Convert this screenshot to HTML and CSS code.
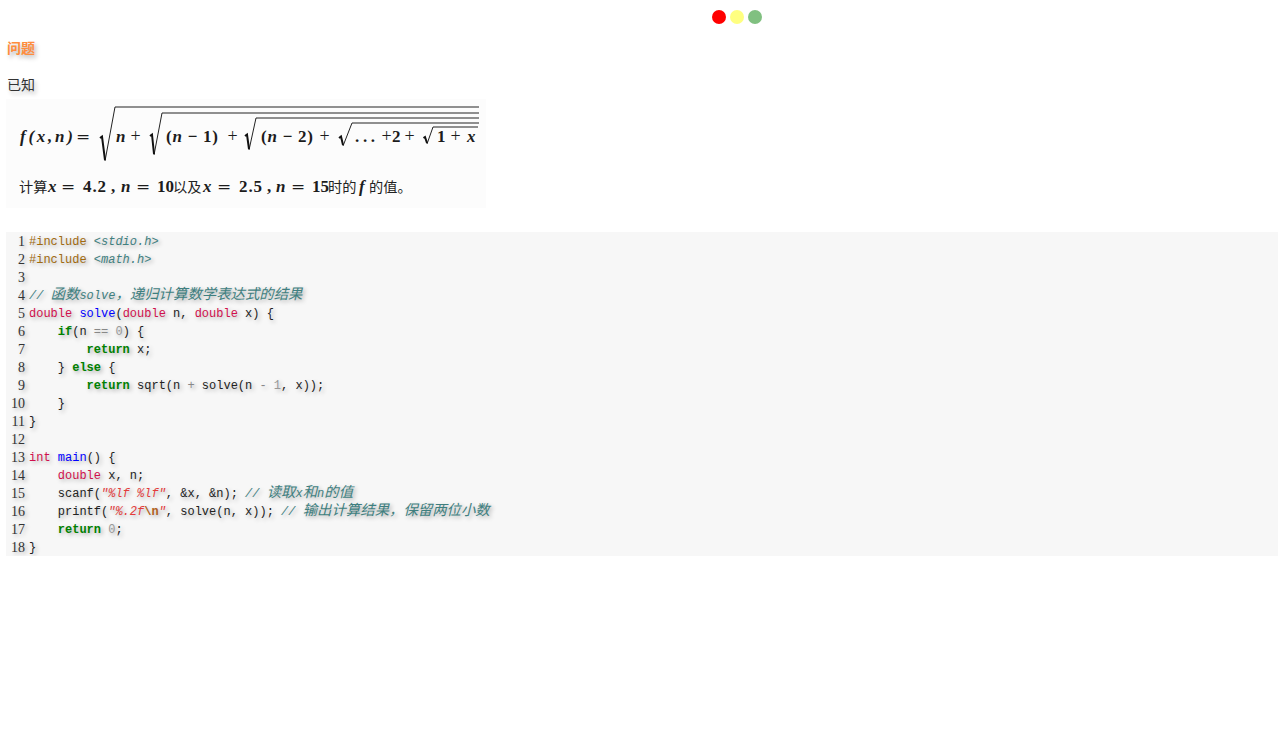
FILE: index.html
```html
<!DOCTYPE html>
<html lang="zh">
<head>
<meta charset="utf-8">
<title>问题</title>
<link rel="stylesheet" href="styles.css">
</head>
<body>
<div class="dots"><span class="dot red"></span><span class="dot yellow"></span><span class="dot green"></span></div>
<h3 class="title">问题</h3>
<p class="known">已知</p>
<svg class="formula" width="480" height="109" viewBox="0 0 480 109" xmlns="http://www.w3.org/2000/svg">
  <rect width="480" height="109" fill="#fcfcfc"/>
  <g class="rad">
    <path d="M109 8 H473 M156 14 H473 M250 19 H473 M346 24 H473 M427 28 H472"/>
    <path d="M99 62 L109 8 M148 56 L156 14 M243 51 L250 19 M337 47 L346 24 M421 45 L427 28"/>
    <path class="heavy" d="M94 39 L96 37.5 L99 61 M144 37 L146 35.5 L148 55 M239 37 L241 35.5 L243 50 M333 39 L335 37.5 L337 46 M417.5 39 L419 38 L421 44"/>
  </g>
  <text class="m" x="14" y="43" textLength="53">f(x,n)</text>
  <text class="meq" x="70" y="43">=</text>
  <text class="m" x="110" y="43">n</text>
  <text class="mp" x="124.5" y="43">+</text>
  <text class="mb" x="160" y="43" textLength="52">(<tspan class="mi">n</tspan> − 1)</text>
  <text class="mp" x="221.5" y="43">+</text>
  <text class="mb" x="255" y="43" textLength="52">(<tspan class="mi">n</tspan> − 2)</text>
  <text class="mp" x="313.5" y="43">+</text>
  <text class="mb" x="349" y="43" textLength="20">. . .</text>
  <text class="mp" x="375.5" y="43">+</text>
  <text class="mb" x="386" y="43">2</text>
  <text class="mp" x="398.5" y="43">+</text>
  <text class="mb" x="431" y="43">1</text>
  <text class="mp" x="444.5" y="43">+</text>
  <text class="m" x="461" y="43">x</text>

  <text class="cn" x="13" y="93">计算</text>
  <text class="m" x="42" y="93">x</text>
  <text class="meq" x="55" y="93">=</text>
  <text class="mb" x="77" y="93" textLength="23">4.2</text>
  <text class="mb" x="105" y="93">,</text>
  <text class="m" x="115" y="93">n</text>
  <text class="meq" x="130" y="93">=</text>
  <text class="mb" x="151" y="93">10</text>
  <text class="cn" x="167" y="93">以及</text>
  <text class="m" x="197" y="93">x</text>
  <text class="meq" x="211" y="93">=</text>
  <text class="mb" x="233" y="93" textLength="23">2.5</text>
  <text class="mb" x="261" y="93">,</text>
  <text class="m" x="270" y="93">n</text>
  <text class="meq" x="285" y="93">=</text>
  <text class="mb" x="306" y="93">15</text>
  <text class="cn" x="322" y="93">时的</text>
  <text class="m" x="353" y="93">f</text>
  <text class="cn" x="363" y="93">的值。</text>
</svg>
<div class="code">
<ol class="nums"><li>1</li><li>2</li><li>3</li><li>4</li><li>5</li><li>6</li><li>7</li><li>8</li><li>9</li><li>10</li><li>11</li><li>12</li><li>13</li><li>14</li><li>15</li><li>16</li><li>17</li><li>18</li></ol>
<div class="src">
<div class="ln"><span class="pp">#include</span> <span class="cm">&lt;stdio.h&gt;</span></div>
<div class="ln"><span class="pp">#include</span> <span class="cm">&lt;math.h&gt;</span></div>
<div class="ln"></div>
<div class="ln"><span class="cm">// <span class="zh">函数</span>solve<span class="zh">，递归计算数学表达式的结果</span></span></div>
<div class="ln"><span class="ty">double</span> <span class="fn">solve</span>(<span class="ty">double</span> n, <span class="ty">double</span> x) {</div>
<div class="ln">    <span class="kw">if</span>(n <span class="op">==</span> <span class="nu">0</span>) {</div>
<div class="ln">        <span class="kw">return</span> x;</div>
<div class="ln">    } <span class="kw">else</span> {</div>
<div class="ln">        <span class="kw">return</span> sqrt(n <span class="op">+</span> solve(n <span class="op">-</span> <span class="nu">1</span>, x));</div>
<div class="ln">    }</div>
<div class="ln">}</div>
<div class="ln"></div>
<div class="ln"><span class="ty">int</span> <span class="fn">main</span>() {</div>
<div class="ln">    <span class="ty">double</span> x, n;</div>
<div class="ln">    scanf(<span class="st">"%lf %lf"</span>, &amp;x, &amp;n); <span class="cm">// <span class="zh">读取</span>x<span class="zh">和</span>n<span class="zh">的值</span></span></div>
<div class="ln">    printf(<span class="st">"%.2f<span class="es">\n</span>"</span>, solve(n, x)); <span class="cm">// <span class="zh">输出计算结果，保留两位小数</span></span></div>
<div class="ln">    <span class="kw">return</span> <span class="nu">0</span>;</div>
<div class="ln">}</div>
</div>
</div>
</body>
</html>
```
FILE: styles.css
```css
html, body { margin: 0; padding: 0; background: #fff; }
body {
  padding: 10px 0 0 6px;
  font-family: "Liberation Sans", "Noto Sans CJK SC", sans-serif;
  font-size: 14px;
  color: #333;
  text-shadow: 2px 3px 4px rgba(0, 0, 0, .28);
}
.dots { display: flex; gap: 4px; padding-left: 706px; }
.dot { width: 14px; height: 14px; border-radius: 50%; }
.red { background: #ff0000; }
.yellow { background: #ffff80; }
.green { background: #80c080; }
.title { margin: 0; padding: 14px 0 0 1px; font-size: 14px; line-height: 20px; font-weight: 700; color: #ff8c3c; }
.known { margin: 0; padding: 17px 0 0 1px; line-height: 20px; }
.formula { display: block; margin-top: 4px; text-shadow: none; }
.rad path { fill: none; stroke: #222; stroke-width: 1; }
.rad .heavy { stroke: #111; stroke-width: 2; }
.m, .mi { font: italic 700 17px "Liberation Serif", serif; fill: #1c1c1c; }
.mb { font: 700 17px "Liberation Serif", serif; fill: #1c1c1c; }
.meq { font: 400 17px "DejaVu Serif", serif; fill: #1c1c1c; }
.mp { font: 400 18px "Liberation Serif", serif; fill: #1c1c1c; }
.cn { font: 400 14.2px "Noto Sans CJK SC", sans-serif; fill: #222; }
.code {
  display: flex;
  box-sizing: border-box;
  height: 324px;
  margin-top: 24px;
  padding-top: 1px;
  background: #f7f7f7;
  font: 12px/18px "Liberation Mono", "Noto Sans CJK SC", monospace;
  color: #222;
  text-shadow: 2px 2px 4px rgba(0, 0, 0, .3);
}
.nums { width: 19px; margin: 0; padding: 0; list-style: none; text-align: right; color: #333; font-size: 14px; font-family: "Liberation Serif", serif; }
.src { margin-left: 4px; }
.ln { height: 18px; white-space: pre; }
.pp { color: #a06a10; }
.cm { color: #3f7f7f; font-style: italic; }
.zh { font-size: 14.4px; line-height: 0; }
.ty { color: #d0104c; }
.fn { color: #0000ff; }
.kw { color: #008000; font-weight: 700; }
.nu { color: #999; }
.op { color: #888; }
.st { color: #e33b3b; font-style: italic; }
.es { color: #b06020; font-weight: 700; font-style: normal; }
```
